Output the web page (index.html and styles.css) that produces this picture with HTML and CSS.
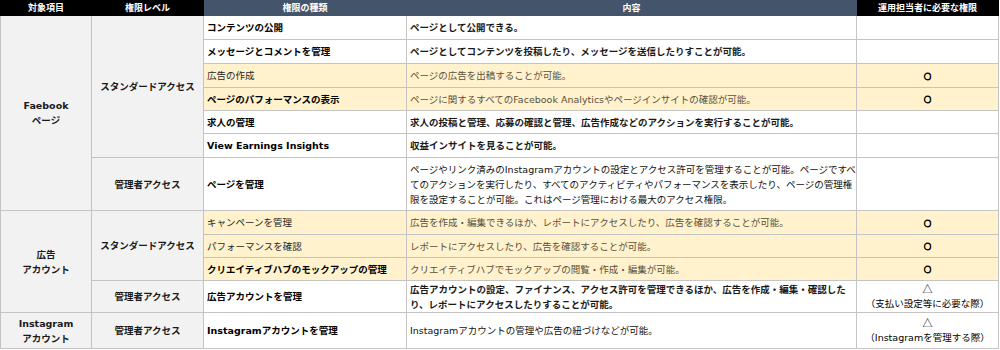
FILE: index.html
```html
<!DOCTYPE html>
<html lang="ja">
<head>
<meta charset="utf-8">
<title>権限一覧</title>
<link rel="stylesheet" href="styles.css">
</head>
<body>
<table class="perm">
  <colgroup>
    <col class="c1"><col class="c2"><col class="c3"><col class="c4"><col class="c5">
  </colgroup>
  <thead>
    <tr class="h">
      <th class="dark">対象項目</th>
      <th class="dark">権限レベル</th>
      <th class="slate">権限の種類</th>
      <th class="slate">内容</th>
      <th class="dark">運用担当者に必要な権限</th>
    </tr>
  </thead>
  <tbody>
    <tr class="r24">
      <td class="grp" rowspan="7">Faebook<br>ページ</td>
      <td class="lvl" rowspan="6">スタンダードアクセス</td>
      <td class="kind">コンテンツの公開</td>
      <td class="desc b">ページとして公開できる。</td>
      <td class="need"></td>
    </tr>
    <tr class="r24">
      <td class="kind">メッセージとコメントを管理</td>
      <td class="desc b">ページとしてコンテンツを投稿したり、メッセージを送信したりすことが可能。</td>
      <td class="need"></td>
    </tr>
    <tr class="r24 y">
      <td class="kind lite">広告の作成</td>
      <td class="desc">ページの広告を出稿することが可能。</td>
      <td class="need"><span class="mark">○</span></td>
    </tr>
    <tr class="r23 y">
      <td class="kind">ページのパフォーマンスの表示</td>
      <td class="desc">ページに関するすべてのFacebook Analyticsやページインサイトの確認が可能。</td>
      <td class="need"><span class="mark">○</span></td>
    </tr>
    <tr class="r23">
      <td class="kind">求人の管理</td>
      <td class="desc b">求人の投稿と管理、応募の確認と管理、広告作成などのアクションを実行することが可能。</td>
      <td class="need"></td>
    </tr>
    <tr class="r24">
      <td class="kind">View Earnings Insights</td>
      <td class="desc b">収益インサイトを見ることが可能。</td>
      <td class="need"></td>
    </tr>
    <tr class="r53">
      <td class="lvl">管理者アクセス</td>
      <td class="kind">ページを管理</td>
      <td class="desc m">ページやリンク済みのInstagramアカウントの設定とアクセス許可を管理することが可能。ページですべ<br>てのアクションを実行したり、すべてのアクティビティやパフォーマンスを表示したり、ページの管理権<br>限を設定することが可能。これはページ管理における最大のアクセス権限。</td>
      <td class="need"></td>
    </tr>
    <tr class="r24 y">
      <td class="grp" rowspan="4">広告<br>アカウント</td>
      <td class="lvl" rowspan="3">スタンダードアクセス</td>
      <td class="kind lite">キャンペーンを管理</td>
      <td class="desc">広告を作成・編集できるほか、レポートにアクセスしたり、広告を確認することが可能。</td>
      <td class="need"><span class="mark">○</span></td>
    </tr>
    <tr class="r23 y">
      <td class="kind lite">パフォーマンスを確認</td>
      <td class="desc">レポートにアクセスしたり、広告を確認することが可能。</td>
      <td class="need"><span class="mark">○</span></td>
    </tr>
    <tr class="r23 y">
      <td class="kind">クリエイティブハブのモックアップの管理</td>
      <td class="desc">クリエイティブハブでモックアップの閲覧・作成・編集が可能。</td>
      <td class="need"><span class="mark">○</span></td>
    </tr>
    <tr class="r32">
      <td class="lvl">管理者アクセス</td>
      <td class="kind">広告アカウントを管理</td>
      <td class="desc b">広告アカウントの設定、ファイナンス、アクセス許可を管理できるほか、広告を作成・編集・確認した<br>り、レポートにアクセスしたりすることが可能。</td>
      <td class="need note"><span class="tri">△</span><br>（支払い設定等に必要な際）</td>
    </tr>
    <tr class="r36">
      <td class="grp">Instagram<br>アカウント</td>
      <td class="lvl">管理者アクセス</td>
      <td class="kind">Instagramアカウントを管理</td>
      <td class="desc m">Instagramアカウントの管理や広告の紐づけなどが可能。</td>
      <td class="need note"><span class="tri">△</span><br>（Instagramを管理する際）</td>
    </tr>
  </tbody>
</table>
</body>
</html>
```

FILE: styles.css
```css
html, body {
  margin: 0;
  padding: 0;
  background: #ffffff;
}

body {
  font-family: "DejaVu Sans", "Noto Sans CJK JP", sans-serif;
  font-size: 9.5px;
  color: #111111;
}

.perm {
  width: 998px;
  table-layout: fixed;
  border-collapse: collapse;
}

.c1 { width: 91px; }
.c2 { width: 112px; }
.c3 { width: 203px; }
.c4 { width: 450px; }
.c5 { width: 142px; }

.perm th,
.perm td {
  border: 1px solid #c4c4c4;
  padding: 0 3px;
  line-height: 15px;
  vertical-align: middle;
  overflow: hidden;
}

.perm th {
  color: #ffffff;
  font-weight: 700;
  text-align: center;
  font-size: 9px;
  line-height: 13px;
}

.perm th.dark { background: #000000; border-color: #000000; }
.perm th.slate { background: #44546a; border-color: #44546a; }

.h { height: 15px; }
.r23 { height: 23px; }
.r24 { height: 24px; }
.r32 { height: 32px; }
.r36 { height: 36px; }
.r53 { height: 53px; }

.grp,
.lvl {
  background: #f2f2f2;
  text-align: center;
  font-weight: 700;
  color: #1a1a1a;
}

.kind {
  font-weight: 700;
  color: #000000;
  white-space: nowrap;
}

.kind.lite {
  font-weight: 400;
  color: #262626;
}

.desc {
  color: #1a1a1a;
  white-space: nowrap;
}

.desc.b { font-weight: 700; }
.desc.m { font-weight: 400; color: #111111; }

.need {
  text-align: center;
  font-weight: 700;
  color: #000000;
}

.mark {
  font-family: "Noto Sans CJK JP", sans-serif;
  font-weight: 700;
  font-size: 7px;
  -webkit-text-stroke: 0.9px #000000;
}

.tri {
  font-family: "Noto Sans CJK JP", sans-serif;
  font-size: 10px;
}

.need.note {
  font-weight: 400;
  line-height: 14px;
}

.y .kind,
.y .desc,
.y .need { background: #fff2cc; }
.y .desc { color: #5a4f3c; font-weight: 400; }
```
